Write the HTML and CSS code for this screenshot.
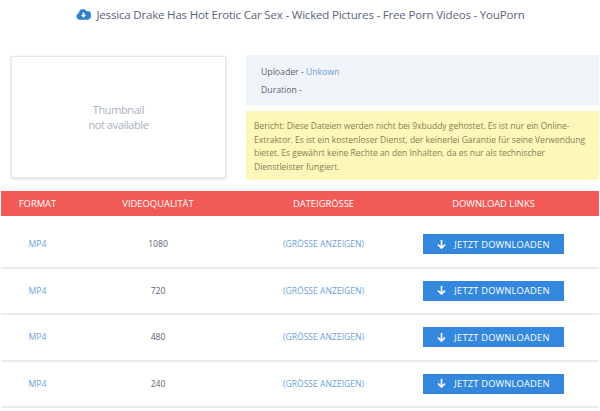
FILE: index.html
```html
<!DOCTYPE html>
<html lang="de">
<head>
<meta charset="utf-8">
<title>9xbuddy</title>
<link rel="stylesheet" href="styles.css">
</head>
<body>
<h1 class="title">
  <svg class="cloud" viewBox="0 0 16 12" width="15" height="12"><path fill="#3182ce" d="M4 12a3.600 3.600 0 0 1-1-7A4.400 4.400 0 0 1 11.200 3 3.600 3.600 0 0 1 15.900 7.600 4 4 0 0 1 12.500 12z"/><path fill="#fff" d="M7 4.500h2v2.500h1.800L8 10 5.200 7H7z"/></svg>
  <span>Jessica Drake Has Hot Erotic Car Sex - Wicked Pictures - Free Porn Videos - YouPorn</span>
</h1>
<section class="summary">
  <div class="thumb"><span>Thumbnail<br>not available</span></div>
  <div class="side">
    <div class="info">
      <p>Uploader - <a class="link">Unkown</a></p>
      <p>Duration -</p>
    </div>
    <div class="notice">Bericht: Diese Dateien werden nicht bei 9xbuddy gehostet. Es ist nur ein Online-Extraktor. Es ist ein kostenloser Dienst, der keinerlei Garantie für seine Verwendung bietet. Es gewährt keine Rechte an den Inhalten, da es nur als technischer Dienstleister fungiert.</div>
  </div>
</section>
<section class="table">
  <div class="row head"><div>FORMAT</div><div>VIDEOQUALITÄT</div><div>DATEIGRÖSSE</div><div>DOWNLOAD LINKS</div></div>
  <div class="row"><div class="link">MP4</div><div>1080</div><div class="link">(GRÖSSE ANZEIGEN)</div><div><a class="btn"><svg viewBox="0 0 10 10" width="9" height="9"><path fill="none" stroke="#fff" stroke-width="1.800" d="M5 0v8.500M1 5l4 4 4-4"/></svg>JETZT DOWNLOADEN</a></div></div>
  <div class="row"><div class="link">MP4</div><div>720</div><div class="link">(GRÖSSE ANZEIGEN)</div><div><a class="btn"><svg viewBox="0 0 10 10" width="9" height="9"><path fill="none" stroke="#fff" stroke-width="1.800" d="M5 0v8.500M1 5l4 4 4-4"/></svg>JETZT DOWNLOADEN</a></div></div>
  <div class="row"><div class="link">MP4</div><div>480</div><div class="link">(GRÖSSE ANZEIGEN)</div><div><a class="btn"><svg viewBox="0 0 10 10" width="9" height="9"><path fill="none" stroke="#fff" stroke-width="1.800" d="M5 0v8.500M1 5l4 4 4-4"/></svg>JETZT DOWNLOADEN</a></div></div>
  <div class="row"><div class="link">MP4</div><div>240</div><div class="link">(GRÖSSE ANZEIGEN)</div><div><a class="btn"><svg viewBox="0 0 10 10" width="9" height="9"><path fill="none" stroke="#fff" stroke-width="1.800" d="M5 0v8.500M1 5l4 4 4-4"/></svg>JETZT DOWNLOADEN</a></div></div>
</section>
</body>
</html>
```
FILE: styles.css
```css
* { box-sizing: border-box; }
html, body { margin: 0; height: 411px; overflow: hidden; background: #fff; }
body { font-family: "Open Sans", "Noto Sans", sans-serif; color: #4a5568; }
.title { margin: 0; height: 55px; padding-top: 5px; display: flex; justify-content: center; align-items: flex-start; gap: 5px; font-size: 11.500px; line-height: 19px; font-weight: 400; letter-spacing: -.18px; color: #5a6578; }
.cloud { margin-top: 3px; margin-left: 1px; }
.summary { display: flex; padding: 0 1px 0 11px; height: 136px; }
.thumb { width: 215px; height: 122px; margin-top: 1px; border: 1px solid #e2e8f0; box-shadow: 0 1px 3px rgba(0,0,0,.15); display: flex; align-items: center; justify-content: center; text-align: center; font-size: 11px; line-height: 15px; letter-spacing: -.4px; color: #a9b2c0; }
.side { margin-left: 20px; flex: 1; display: flex; flex-direction: column; gap: 6px; }
.info { height: 50px; background: #f0f4f8; padding: 8px 15px; font-size: 8.700px; line-height: 18px; color: #5a6578; }
.info p { margin: 0; }
.link { color: #6a9fd8; }
.notice { height: 69px; background: #fef7ba; padding: 8px; font-size: 8.500px; line-height: 13.500px; color: #857f52; }
.table { margin: 0 1px; }
.row { display: grid; grid-template-columns: 73px 168px 163px 177px; padding-right: 17px; align-items: center; height: 46.500px; border-bottom: 2px solid #ebebeb; text-align: center; font-size: 8.600px; color: #5a6578; }
.head { height: 25px; margin-bottom: 6px; background: #f25a57; border: 0; font-size: 9.400px; color: #fff; }
.btn { display: inline-flex; align-items: center; justify-content: center; gap: 8px; width: 141px; height: 20px; background: #3388dd; font-size: 9.300px; color: #fff; letter-spacing: .2px; }
```
